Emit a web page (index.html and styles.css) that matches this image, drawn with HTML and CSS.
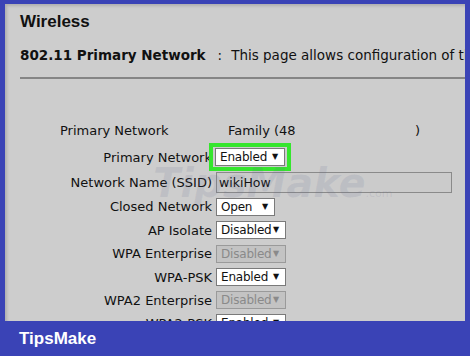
FILE: index.html
```html
<!DOCTYPE html>
<html>
<head>
<meta charset="utf-8">
<link rel="stylesheet" href="styles.css">
</head>
<body>
<div class="frame">
  <h1 class="title">Wireless</h1>
  <div class="intro"><b>802.11 Primary Network</b><span class="colon">:</span><span>This page allows configuration of the Primary Network</span></div>
  <hr class="rule">
  <div class="info"><span class="info-label">Primary Network</span><span class="info-val">Family (48</span><span class="info-end">)</span></div>
  <div class="form">
    <label>Primary Network</label>
    <div class="ctl"><span class="hl"><span class="sel w70">Enabled<i>▼</i></span></span></div>
    <label>Network Name (SSID)</label>
    <div class="ctl"><span class="txt">wikiHow</span></div>
    <label>Closed Network</label>
    <div class="ctl"><span class="sel w60">Open<i>▼</i></span></div>
    <label>AP Isolate</label>
    <div class="ctl"><span class="sel w70">Disabled<i>▼</i></span></div>
    <label>WPA Enterprise</label>
    <div class="ctl"><span class="sel w70 dis">Disabled<i>▼</i></span></div>
    <label>WPA-PSK</label>
    <div class="ctl"><span class="sel w70">Enabled<i>▼</i></span></div>
    <label>WPA2 Enterprise</label>
    <div class="ctl"><span class="sel w70 dis">Disabled<i>▼</i></span></div>
    <label>WPA2-PSK</label>
    <div class="ctl"><span class="sel w70">Enabled<i>▼</i></span></div>
  </div>
  <div class="mark">TipsMake<small>.com</small></div>
</div>
<div class="footer">TipsMake</div>
</body>
</html>
```
FILE: styles.css
```css
html, body { margin: 0; padding: 0; }
body {
  width: 470px;
  height: 356px;
  background: #3a43b6;
  overflow: hidden;
  font-family: "DejaVu Sans", Verdana, sans-serif;
  color: #111;
}
.frame {
  position: relative;
  margin: 4px 5px 0 5px;
  height: 317px;
  background: #cdcdcd;
  box-shadow: inset 2px 2px 3px rgba(0,0,0,0.15);
  overflow: hidden;
  padding-left: 15px;
  box-sizing: border-box;
}
.title {
  margin: 0;
  padding-top: 9px;
  font-family: "Liberation Sans", Arial, sans-serif;
  font-size: 17px;
  font-weight: bold;
  line-height: 18px;
}
.intro {
  margin-top: 16px;
  font-size: 13.5px;
  line-height: 16px;
  white-space: nowrap;
  display: flex;
}
.intro b { font-weight: bold; }
.colon { margin: 0 9px 0 12px; }
.rule {
  margin: 14px 0 0 0;
  border: 0;
  height: 2px;
  background: #858585;
}
.info {
  margin-top: 44px;
  display: flex;
  font-size: 13px;
  line-height: 16px;
  padding-left: 40px;
  white-space: nowrap;
}
.info-label { width: 168px; }
.info-val { width: 187px; }
.form {
  margin-top: 5px;
  margin-left: -15px;
  display: grid;
  grid-template-columns: 207px 1fr;
  grid-template-rows: 26px 24.5px 24px 23.5px 23.5px 23px 23px 23px;
  column-gap: 4px;
  align-items: center;
  font-size: 13px;
}
.form label { text-align: right; white-space: nowrap; }
.ctl { display: flex; align-items: center; }
.sel {
  box-sizing: border-box;
  height: 18px;
  border: 1px solid #7a7a7a;
  background: #fff;
  display: flex;
  align-items: center;
  justify-content: space-between;
  padding: 0 6px 0 4px;
  font-size: 12px;
  letter-spacing: -0.2px;
  line-height: 16px;
}
.sel i { font-style: normal; font-size: 8px; }
.sel.w70 { width: 70px; }
.sel.w60 { width: 59px; }
.sel.dis { background: #c3c3c3; color: #8a8a8a; border-color: #9a9a9a; }
.hl {
  margin: -5px 0 -5px -7px;
  border: 4px solid #35e62d;
  padding: 1px 2px;
  background: #cdcdcd;
  display: inline-flex;
}
.txt {
  box-sizing: border-box;
  width: 236px;
  height: 21px;
  border: 1px solid #8a8a8a;
  background: #cbcbcb;
  padding: 0 2px;
  line-height: 19px;
  font-size: 12.5px;
}
.mark {
  position: absolute;
  left: 148px;
  top: 156px;
  font-family: "DejaVu Sans", sans-serif;
  font-weight: bold;
  font-style: italic;
  font-size: 40px;
  color: rgba(90, 100, 140, 0.12);
  pointer-events: none;
  white-space: nowrap;
}
.mark small { font-size: 11px; font-style: normal; font-weight: normal; }
.footer {
  height: 35px;
  padding-left: 19px;
  color: #fff;
  font-family: "Liberation Sans", Arial, sans-serif;
  font-weight: bold;
  font-size: 17px;
  line-height: 35px;
}
```
